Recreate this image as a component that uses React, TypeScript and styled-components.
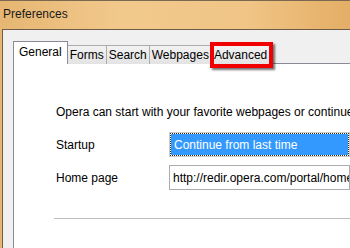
import React from "react";
import styled, {createGlobalStyle, css} from "styled-components";

const Global = createGlobalStyle`
    html, body {
        margin: 0;
        padding: 0;
        overflow: hidden;
    }
    body {
        font-family: "Liberation Sans", Arial, sans-serif;
        font-size: 12px;
        color: #000;
    }
`;

const Frame = styled.div`
    width: 350px;
    height: 248px;
    display: flex;
    flex-direction: column;
    overflow: hidden;
    border-top: 1px solid #7a6850;
    box-sizing: border-box;
    background: linear-gradient(90deg, #e6b672 0%, #f2c98c 35%, #f0c586 70%, #e4ae66 100%);
`;

const TitleBar = styled.div`
    height: 28px;
    flex: none;
    display: flex;
    align-items: center;
    padding: 0 0 2px 3px;
    box-sizing: border-box;
    font-size: 12px;
    color: #1a1a1a;
`;

const Client = styled.div`
    flex: 1;
    margin-left: 2px;
    border-top: 1px solid #6e5c44;
    border-left: 1px solid #6e5c44;
    background: #f0f0f0;
    padding: 11px 0 0 10px;
    display: flex;
    flex-direction: column;
`;

const TabStrip = styled.div`
    display: flex;
    align-items: flex-end;
    height: 23px;
    margin-bottom: -1px;
    position: relative;
    z-index: 1;
`;

const Tab = styled.div<{ active?: boolean; marked?: boolean }>`
    box-sizing: border-box;
    display: flex;
    align-items: center;
    justify-content: center;
    height: 19px;
    padding: 0 2px 1px;
    border: 1px solid #acacac;
    border-bottom: none;
    border-left: none;
    background: linear-gradient(#f2f2f2, #e3e3e3);
    color: #000;
    position: relative;

    ${props => props.active && css`
        height: 23px;
        padding: 0 5px 3px;
        border: 1px solid #898c95;
        border-bottom: none;
        background: #fff;
    `}

    ${props => props.marked && css`
        &::after {
            content: "";
            position: absolute;
            top: -4px;
            left: -2px;
            right: -4px;
            bottom: -4px;
            border: 4px solid #f00000;
            box-shadow: 2px 2px 2px rgba(0, 0, 0, 0.55);
        }
    `}
`;

const Panel = styled.div`
    flex: 1;
    background: #fff;
    border-top: 1px solid #898c95;
    border-left: 1px solid #898c95;
    padding: 41px 0 0 42px;
`;

const Intro = styled.div`
    white-space: nowrap;
    line-height: 15px;
    margin-bottom: 12px;
`;

const Row = styled.div`
    display: grid;
    grid-template-columns: 113px 1fr;
    align-items: center;
    margin-bottom: 8px;
    white-space: nowrap;
`;

const Select = styled.div`
    height: 25px;
    box-sizing: border-box;
    border: 1px solid #c9c9c9;
    padding: 1px;
    display: flex;
`;

const SelectInner = styled.div`
    flex: 1;
    background: #3399ff;
    color: #fff;
    outline: 1px dotted #3a2a10;
    display: flex;
    align-items: center;
    padding-left: 3px;
    overflow: hidden;
`;

const Field = styled.div`
    height: 25px;
    box-sizing: border-box;
    border: 1px solid #abadb3;
    display: flex;
    align-items: center;
    padding-left: 3px;
    overflow: hidden;
`;

const Rule = styled.div`
    height: 1px;
    background: #bcbcbc;
    margin: 28px 0 0 -2px;
`;

export default function App() {
    const tabs = ["General", "Forms", "Search", "Webpages", "Advanced"];
    return <>
        <Global/>
        <Frame>
            <TitleBar>Preferences</TitleBar>
            <Client>
                <TabStrip>
                    {tabs.map((t, i) =>
                        <Tab key={t} active={i === 0} marked={t === "Advanced"}>{t}</Tab>)}
                </TabStrip>
                <Panel>
                    <Intro>Opera can start with your favorite webpages or continue from where you left off last time.</Intro>
                    <Row>
                        <span>Startup</span>
                        <Select><SelectInner>Continue from last time</SelectInner></Select>
                    </Row>
                    <Row>
                        <span>Home page</span>
                        <Field>http://redir.opera.com/portal/home/</Field>
                    </Row>
                    <Rule/>
                </Panel>
            </Client>
        </Frame>
    </>;
}
